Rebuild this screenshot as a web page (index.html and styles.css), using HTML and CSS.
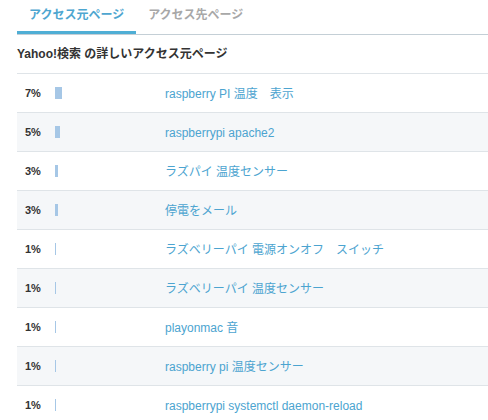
FILE: index.html
```html
<!DOCTYPE html>
<html lang="ja">
<head>
    <meta charset="UTF-8">
    <meta name="viewport" content="width=device-width, initial-scale=1.0">
    <title>アクセス元ページ</title>
    <link rel="stylesheet" href="styles.css">
</head>
<body>
    <div class="panel">
        <div class="tabs">
            <a class="tab active" href="#">アクセス元ページ</a>
            <a class="tab" href="#">アクセス先ページ</a>
        </div>

        <h2 class="panel-title">Yahoo!検索 の詳しいアクセス元ページ</h2>

        <table class="ref-table">
            <tbody>
                <tr>
                    <td class="pct">7%</td>
                    <td class="bar-cell"><span class="bar" style="width: 7px"></span></td>
                    <td><a class="ref-link" href="#">raspberry PI 温度　表示</a></td>
                </tr>
                <tr>
                    <td class="pct">5%</td>
                    <td class="bar-cell"><span class="bar" style="width: 5px"></span></td>
                    <td><a class="ref-link" href="#">raspberrypi apache2</a></td>
                </tr>
                <tr>
                    <td class="pct">3%</td>
                    <td class="bar-cell"><span class="bar" style="width: 3px"></span></td>
                    <td><a class="ref-link" href="#">ラズパイ 温度センサー</a></td>
                </tr>
                <tr>
                    <td class="pct">3%</td>
                    <td class="bar-cell"><span class="bar" style="width: 3px"></span></td>
                    <td><a class="ref-link" href="#">停電をメール</a></td>
                </tr>
                <tr>
                    <td class="pct">1%</td>
                    <td class="bar-cell"><span class="bar" style="width: 1px"></span></td>
                    <td><a class="ref-link" href="#">ラズベリーパイ 電源オンオフ　スイッチ</a></td>
                </tr>
                <tr>
                    <td class="pct">1%</td>
                    <td class="bar-cell"><span class="bar" style="width: 1px"></span></td>
                    <td><a class="ref-link" href="#">ラズベリーパイ 温度センサー</a></td>
                </tr>
                <tr>
                    <td class="pct">1%</td>
                    <td class="bar-cell"><span class="bar" style="width: 1px"></span></td>
                    <td><a class="ref-link" href="#">playonmac 音</a></td>
                </tr>
                <tr>
                    <td class="pct">1%</td>
                    <td class="bar-cell"><span class="bar" style="width: 1px"></span></td>
                    <td><a class="ref-link" href="#">raspberry pi 温度センサー</a></td>
                </tr>
                <tr>
                    <td class="pct">1%</td>
                    <td class="bar-cell"><span class="bar" style="width: 1px"></span></td>
                    <td><a class="ref-link" href="#">raspberrypi systemctl daemon-reload</a></td>
                </tr>
            </tbody>
        </table>
    </div>
</body>
</html>
```

FILE: styles.css
```css
body {
    margin: 0;
    padding: 0 0 0 17px;
    background: white;
    font-family: 'Liberation Sans', 'Noto Sans CJK JP', sans-serif;
    color: #333;
}
.panel {
    width: 471px;
}
.tabs {
    display: flex;
    border-bottom: 1px solid #c4cfd6;
}
.tab {
    display: block;
    padding: 0 12px;
    line-height: 31px;
    font-size: 12px;
    font-weight: bold;
    color: #a8a8a8;
    text-decoration: none;
    border-bottom: 3px solid transparent;
}
.tab.active {
    color: #4ea6d0;
    border-bottom-color: #4faed5;
}
.panel-title {
    margin: 0;
    height: 38px;
    line-height: 39px;
    font-size: 12px;
    font-weight: bold;
    color: #333;
    border-bottom: 1px solid #dfe4e8;
}
.ref-table {
    width: 100%;
    border-collapse: collapse;
}
.ref-table td {
    height: 38px;
    padding: 0;
    border-bottom: 1px solid #dfe4e8;
    vertical-align: middle;
}
.ref-table tr:nth-child(even) {
    background: #f5f7f9;
}
.pct {
    width: 30px;
    padding-left: 8px !important;
    font-size: 11px;
    font-weight: bold;
    color: #333;
}
.bar-cell {
    width: 110px;
}
.bar {
    display: block;
    height: 12px;
    background: #a6c7e6;
}
.ref-link {
    font-size: 12px;
    color: #4ca4d0;
    text-decoration: none;
}
```
